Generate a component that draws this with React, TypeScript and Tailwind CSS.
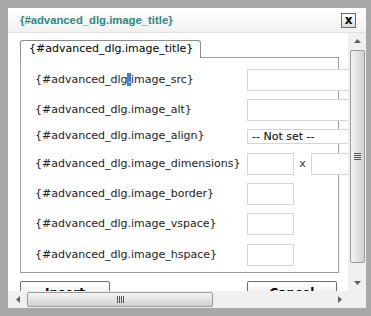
import React from "react";

const rows: { label: string; kind: "wide" | "select" | "dim" | "small"; mt: string }[] = [
  { label: "{#advanced_dlg.image_src}", kind: "wide", mt: "mt-0" },
  { label: "{#advanced_dlg.image_alt}", kind: "wide", mt: "mt-[8px]" },
  { label: "{#advanced_dlg.image_align}", kind: "select", mt: "mt-[4px]" },
  { label: "{#advanced_dlg.image_dimensions}", kind: "dim", mt: "mt-[6px]" },
  { label: "{#advanced_dlg.image_border}", kind: "small", mt: "mt-[8px]" },
  { label: "{#advanced_dlg.image_vspace}", kind: "small", mt: "mt-[8px]" },
  { label: "{#advanced_dlg.image_hspace}", kind: "small", mt: "mt-[9px]" },
];

function Field({ kind }: { kind: string }) {
  if (kind === "wide")
    return <div className="w-[110px] h-[22px] border border-[#d5d5d5] bg-white shrink-0" />;
  if (kind === "select")
    return (
      <div className="w-[110px] h-[15px] border border-[#d5d5d5] bg-white shrink-0 text-[11px] leading-[13px] pl-[4px] text-black">
        -- Not set --
      </div>
    );
  if (kind === "dim")
    return (
      <div className="flex items-center shrink-0">
        <div className="w-[47px] h-[22px] border border-[#d5d5d5] bg-white" />
        <span className="w-[17px] text-center text-[11px] text-[#333]">x</span>
        <div className="w-[60px] h-[22px] border border-[#d5d5d5] bg-white" />
      </div>
    );
  return <div className="w-[47px] h-[22px] border border-[#d5d5d5] bg-white shrink-0" />;
}

export default function App() {
  return (
    <div
      className="w-[371px] h-[316px] bg-[#a8a8a8] pt-[8px] pl-[8px] pr-[5px] pb-[8px] overflow-hidden"
      style={{ fontFamily: '"DejaVu Sans", Verdana, sans-serif' }}
    >
      <div className="w-full h-full flex flex-col bg-[#fbfbfb]">
        {/* title bar */}
        <div className="h-[25px] shrink-0 flex items-center justify-between pl-[12px] pr-[10px] bg-gradient-to-b from-white to-[#f1f1f1] border-b border-[#e2e2e2]">
          <span
            className="text-[11.3px] font-bold text-[#2b8a84]"
            style={{ fontFamily: '"Liberation Sans", Arial, sans-serif' }}
          >
            {"{#advanced_dlg.image_title}"}
          </span>
          <div className="w-[15px] h-[15px] border border-[#6b6b6b] bg-gradient-to-b from-white to-[#dcdcdc] flex items-center justify-center text-[12px] font-bold leading-none text-black">
            x
          </div>
        </div>
        {/* body */}
        <div className="flex-1 flex min-h-0">
          <div className="flex-1 min-w-0 overflow-hidden bg-white pl-[12px] pt-[7px] relative">
            {/* tab */}
            <div className="flex items-end h-[18px]">
              <div className="h-[18px] w-[181px] border border-[#8a8a8a] border-b-0 rounded-t-[3px] bg-white text-[11px] leading-[16px] text-black pl-[8px] relative z-10">
                {"{#advanced_dlg.image_title}"}
              </div>
              <div className="flex-1 h-[1px] bg-[#9c9c9c] mr-[10px]" />
            </div>
            {/* panel */}
            <div className="w-[319px] h-[216px] border border-t-0 border-[#9c9c9c] bg-white -mt-[1px] pt-[12px] flex flex-col">
              {rows.map((r, i) => (
                <div key={i} className={`flex items-center h-[22px] shrink-0 ${r.mt}`}>
                  <span className="w-[226px] pl-[14px] text-[11px] text-[#222] whitespace-nowrap shrink-0">
                    {i === 0 ? (
                      <>
                        {"{#advanced_dlg"}
                        <span className="bg-[#3a7ee6] text-white">.</span>
                        {"image_src}"}
                      </>
                    ) : (
                      r.label
                    )}
                  </span>
                  <Field kind={r.kind} />
                </div>
              ))}
            </div>
            {/* buttons */}
            <div className="flex mt-[8px] gap-[137px]">
              <div className="w-[90px] h-[20px] border border-[#6e6e6e] rounded-t-[2px] bg-gradient-to-b from-white to-[#e8e8e8] text-[12px] font-bold text-center leading-[22px] text-black">
                Insert
              </div>
              <div className="w-[90px] h-[20px] border border-[#6e6e6e] rounded-t-[2px] bg-gradient-to-b from-white to-[#e8e8e8] text-[12px] font-bold text-center leading-[22px] text-black">
                Cancel
              </div>
            </div>
          </div>
          {/* vertical scrollbar */}
          <div className="w-[18px] shrink-0 bg-[#f0f0f0] flex flex-col items-center">
            <div className="h-[16px] w-full flex items-center justify-center">
              <svg width="7" height="4" viewBox="0 0 7 4"><path d="M0 4 L3.5 0 L7 4Z" fill="#606060" /></svg>
            </div>
            <div className="flex-1 w-[15px] mt-[1px] mb-[12px] rounded-[2px] border border-[#9a9a9a] bg-gradient-to-r from-[#f4f4f4] via-[#e3e3e3] to-[#cfcfcf] flex items-center justify-center">
              <div className="flex flex-col gap-[1px]">
                <div className="w-[7px] h-[1px] bg-[#555]" />
                <div className="w-[7px] h-[1px] bg-[#555]" />
                <div className="w-[7px] h-[1px] bg-[#555]" />
                <div className="w-[7px] h-[1px] bg-[#555]" />
              </div>
            </div>
            <div className="h-[16px] w-full flex items-center justify-center">
              <svg width="7" height="4" viewBox="0 0 7 4"><path d="M0 0 L3.5 4 L7 0Z" fill="#606060" /></svg>
            </div>
          </div>
        </div>
        {/* horizontal scrollbar */}
        <div className="h-[17px] shrink-0 flex bg-[#f0f0f0]">
          <div className="flex-1 flex items-center">
            <div className="w-[19px] h-full flex items-center justify-center">
              <svg width="4" height="7" viewBox="0 0 4 7"><path d="M4 0 L0 3.5 L4 7Z" fill="#606060" /></svg>
            </div>
            <div className="w-[186px] h-[15px] rounded-[2px] border border-[#9a9a9a] bg-gradient-to-b from-[#f4f4f4] via-[#e3e3e3] to-[#cfcfcf] flex items-center justify-center">
              <div className="flex gap-[1px]">
                <div className="w-[1px] h-[7px] bg-[#555]" />
                <div className="w-[1px] h-[7px] bg-[#555]" />
                <div className="w-[1px] h-[7px] bg-[#555]" />
                <div className="w-[1px] h-[7px] bg-[#555]" />
              </div>
            </div>
            <div className="flex-1" />
            <div className="w-[16px] h-full flex items-center justify-center">
              <svg width="4" height="7" viewBox="0 0 4 7"><path d="M0 0 L4 3.5 L0 7Z" fill="#606060" /></svg>
            </div>
          </div>
          <div className="w-[18px] bg-[#f0f0f0]" />
        </div>
      </div>
    </div>
  );
}
